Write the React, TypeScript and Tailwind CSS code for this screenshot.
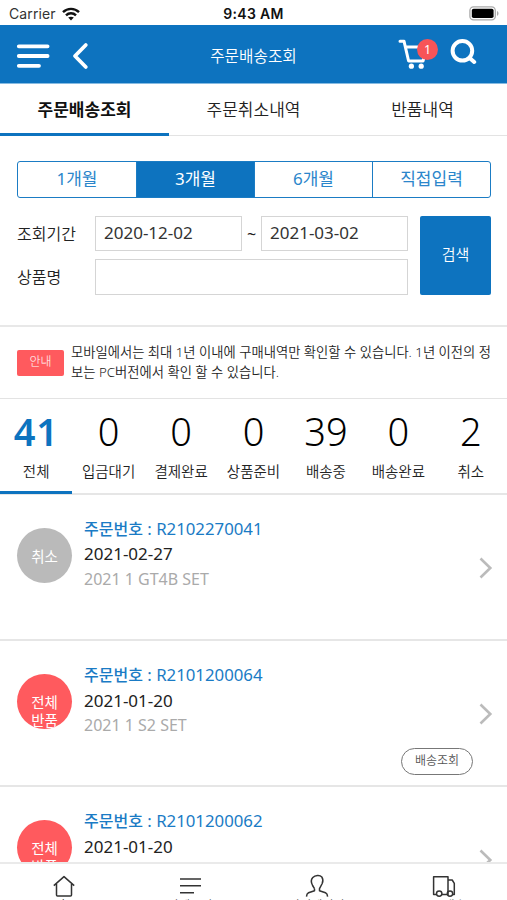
import { useState } from 'react';
import type { ReactNode } from 'react';

type Order = {
    id: string;
    date: string;
    product: string;
    status: string[];
    cancelled?: boolean;
    trackable?: boolean;
};

const tabs = ['주문배송조회', '주문취소내역', '반품내역'];
const periods = ['1개월', '3개월', '6개월', '직접입력'];

const counts = [
    { label: '전체', value: 41 },
    { label: '입금대기', value: 0 },
    { label: '결제완료', value: 0 },
    { label: '상품준비', value: 0 },
    { label: '배송중', value: 39 },
    { label: '배송완료', value: 0 },
    { label: '취소', value: 2 },
];

const orders: Order[] = [
    { id: 'R2102270041', date: '2021-02-27', product: '2021 1 GT4B SET', status: ['취소'], cancelled: true },
    { id: 'R2101200064', date: '2021-01-20', product: '2021 1 S2 SET', status: ['전체', '반품'], trackable: true },
    { id: 'R2101200062', date: '2021-01-20', product: '2021 1 S2 SET', status: ['전체', '반품'], trackable: true },
];

const StatusBar = () => (
    <div className="grid h-[25px] shrink-0 grid-cols-3 items-center bg-white px-[9px] pt-[2px] font-['Inter','Liberation_Sans',sans-serif] text-[14px] text-[#333]">
        <div className="flex items-center gap-[6px]">
            <span className="tracking-[0.1px]">Carrier</span>
            <svg width="18" height="14" viewBox="0 0 18 14" fill="none" stroke="#111" strokeWidth="2.4">
                <path d="M1 5.2C5.5 .7 12.5 .7 17 5.2" />
                <path d="M4 8.3C6.8 5.5 11.2 5.5 14 8.3" />
                <path d="M9 13.6 6.2 10.6C7.8 9.3 10.2 9.3 11.8 10.6Z" fill="#111" stroke="none" />
            </svg>
        </div>
        <span className="text-center font-semibold tracking-[0.3px] whitespace-nowrap text-[#111]">9:43 AM</span>
        <svg className="-mr-[2px] justify-self-end" width="31" height="15" viewBox="0 0 31 15">
            <rect x=".9" y=".9" width="25.4" height="13" rx="3.6" fill="#fff" stroke="#aaa" strokeWidth="1.3" />
            <rect x="2.8" y="2.8" width="21.8" height="9.2" rx="1.8" fill="#000" />
            <path d="M28 5v4.8c2-.8 2-4 0-4.8Z" fill="#aaa" />
        </svg>
    </div>
);

const Header = () => (
    <header className="flex h-[59px] shrink-0 items-center border-b border-[#86bbe2] bg-[#0d73bf] pr-[30px] pl-[16px] text-white">
        <div className="flex w-[150px] items-center pt-[3px]">
            <svg width="34" height="26" viewBox="0 0 34 26" stroke="#fff" strokeWidth="3.8" strokeLinecap="round">
                <path d="M2.8 3.3H31.6M2.8 13H31.6M2.8 22.8H23" />
            </svg>
            <svg className="ml-[22px]" width="18" height="28" viewBox="0 0 18 28" fill="none" stroke="#fff" strokeWidth="3.8" strokeLinecap="round" strokeLinejoin="round">
                <path d="M13.8 3 3 14 13.8 25" />
            </svg>
        </div>
        <h1 className="flex-1 pt-[5px] pl-[14px] text-center text-[15.7px] font-[350]">주문배송조회</h1>
        <div className="flex w-[150px] justify-end">
            <div className="relative mr-[20px] h-[32px] w-[33px]">
                <svg width="33" height="32" viewBox="0 0 33 32" fill="none" stroke="#fff" strokeWidth="3" strokeLinecap="round" strokeLinejoin="round">
                    <path d="M3 3.2H7L11.6 23H26L30 9H8.6" />
                    <circle cx="14.4" cy="28.2" r="2.6" fill="#fff" stroke="none" />
                    <circle cx="24.2" cy="28.2" r="2.6" fill="#fff" stroke="none" />
                </svg>
                <span className="absolute top-[1px] left-[20px] flex size-[21px] items-center justify-center rounded-full bg-[#f75458] pt-[2px] font-['Noto_Sans',sans-serif] text-[12.5px]">1</span>
            </div>
            <svg width="27" height="28" viewBox="0 0 27 28" fill="none" stroke="#fff" strokeWidth="4" strokeLinecap="round">
                <circle cx="12.4" cy="12.8" r="9.8" />
                <path d="m19.6 20 4.6 4" />
            </svg>
        </div>
    </header>
);

const DateInput = ({ value, className }: { value: string; className: string }) => (
    <input readOnly value={value} className={`h-[35px] border border-[#d5d5d5] bg-white px-[8px] pb-[3px] text-[17px] text-[#333] outline-none ${className}`} />
);

const SearchForm = () => {
    const [period, setPeriod] = useState('3개월');

    return (
        <section className="h-[191px] shrink-0 border-b-2 border-[#e8e8e8] pr-[16px] pl-[17px] pt-[25px] text-[16px] text-[#222]">
            <div className="grid h-[37px] w-[474px] grid-cols-4 overflow-hidden rounded-[3px] border border-[#1b7cc4]">
                {
                    periods.map((name, i) => (
                        <button
                            key={name}
                            onClick={() => setPeriod(name)}
                            className={`pb-[2px] text-[17px] ${i > 0 ? 'border-l border-[#1b7cc4]' : ''} ${name === period ? 'bg-[#0d73bf] text-white' : 'text-[#2b86cb]'}`}
                        >
                            {name}
                        </button>
                    ))
                }
            </div>
            <div className="mt-[18px] flex w-[474px] justify-between">
                <div className="flex flex-col gap-[8px]">
                    <div className="flex items-center">
                        <label className="w-[78px] font-[350]">조회기간</label>
                        <DateInput value="2020-12-02" className="w-[147px]" />
                        <span className="w-[19px] text-center">~</span>
                        <DateInput value="2021-03-02" className="w-[147px]" />
                    </div>
                    <div className="flex items-center">
                        <label className="w-[78px] font-[350]">상품명</label>
                        <input className="h-[36px] w-[313px] border border-[#d5d5d5] outline-none" />
                    </div>
                </div>
                <button className="h-[79px] w-[71px] rounded-[2px] bg-[#0d73bf] pb-[2px] text-[15px] font-[350] text-white">검색</button>
            </div>
        </section>
    );
};

const Notice = () => (
    <section className="flex h-[72px] shrink-0 items-center border-b border-[#e3e3e3] px-[17px]">
        <span className="flex h-[26px] w-[47px] shrink-0 items-center justify-center rounded-[2px] bg-[#ff5a5e] pb-[2px] text-[12px] font-light text-white">안내</span>
        <p className="-mt-[2px] ml-[7px] text-[13.3px] leading-[20px] font-[350] whitespace-nowrap text-[#222]">
            모바일에서는 최대 1년 이내에 구매내역만 확인할 수 있습니다. 1년 이전의 정<br />
            보는 PC버전에서 확인 할 수 있습니다.
        </p>
    </section>
);

const OrderRow = ({ order }: { order: Order }) => (
    <li className="relative flex h-[146.2px] shrink-0 border-b-2 border-[#e6e6e6] pt-[33px] pl-[17px]">
        <div className={`flex size-[55px] flex-col items-center overflow-hidden rounded-full text-[14.5px] leading-[18px] text-white ${order.cancelled ? 'justify-center bg-[#bababa]' : 'bg-[#ff5a5e] pt-[19px]'}`}>
            {order.status.map((line) => <span key={line}>{line}</span>)}
        </div>
        <div className="-mt-[12px] ml-[12px] text-[17px] leading-[25.4px]">
            <p className="text-[16.8px] font-[450] text-[#1a7bc5]"><span className="text-[16px] font-medium">주문번호</span> : {order.id}</p>
            <p className="-mt-px text-[#222]">{order.date}</p>
            <p className="text-[16px] text-[#aaa]">{order.product}</p>
        </div>
        <svg className="mt-[28px] mr-[14px] ml-auto" width="15" height="24" viewBox="0 0 15 24" fill="none" stroke="#bbb" strokeWidth="2.6">
            <path d="m2.5 2.5 9.8 9.5-9.8 9.5" />
        </svg>
        {order.trackable && (
            <button className="absolute right-[34px] bottom-[10px] h-[27px] w-[72px] rounded-full border border-[#777] pb-px text-[12px] font-[350] text-[#555]">배송조회</button>
        )}
    </li>
);

const NavItem = ({ label, children }: { label: string; children: ReactNode }) => (
    <a className="flex flex-col items-center text-[12px] leading-[16px] text-[#333]">
        <svg className="ml-[1px]" width="24" height="24" viewBox="0 0 24 24" fill="none" stroke="#333" strokeWidth="1.5" strokeLinejoin="round">
            {children}
        </svg>
        <span className="font-[350] whitespace-nowrap">{label}</span>
    </a>
);

const BottomNav = () => (
    <nav className="absolute inset-x-0 bottom-0 grid h-[38px] grid-cols-4 overflow-hidden border-t-2 border-[#eaeaea] bg-white pt-[10px]">
        <NavItem label="홈">
            <path d="m1.8 11.6 10.2-9 10.2 9M4.5 10v11q0 1 1 1h13q1 0 1-1V10" />
        </NavItem>
        <NavItem label="카테고리">
            <path d="M1 5h21M1 11.8h21M1 18.7h14" />
        </NavItem>
        <NavItem label="마이페이지">
            <path d="M9.5 14.7 7.6 11.5C5.7 8 6.1 5.3 7.8 3.5c2.3-2.4 7.2-2.6 9-.6 1 1.6 1.2 4.8.4 6.6l-2.7 5.2v2l6 2.1c1.4.6 2 1.6 2.1 3.8M9.5 14.7v2l-6 2.1c-1.3.6-1.9 1.6-2 3.8" />
        </NavItem>
        <NavItem label="주문배송">
            <path d="M4.7 20.5H1.6V2.8H16v17.7H9.8M16 6h4.2l2.1 3.4v11.1h-1.7" />
            <circle cx="7.2" cy="19.6" r="2.7" />
            <circle cx="18" cy="19.6" r="2.7" />
        </NavItem>
    </nav>
);

const App = () => {
    const [tab, setTab] = useState(tabs[0]);
    const [filter, setFilter] = useState('전체');

    return (
        <div className="relative flex h-[900px] w-[507px] flex-col overflow-hidden bg-white font-['Noto_Sans','Noto_Sans_CJK_KR',sans-serif]">
            <StatusBar />
            <Header />
            <div className="grid h-[52px] shrink-0 grid-cols-3 border-b border-[#e3e3e3]">
                {
                    tabs.map((name) => (
                        <button
                            key={name}
                            onClick={() => setTab(name)}
                            className={`-mb-px border-b-[3px] pt-[2px] text-[17px] ${name === tab ? 'border-[#0d73bf] font-bold text-[#111]' : 'border-transparent font-[350] text-[#222]'}`}
                        >
                            {name}
                        </button>
                    ))
                }
            </div>
            <SearchForm />
            <Notice />
            <div className="grid h-[96px] shrink-0 grid-cols-7 border-b-2 border-[#e6e6e6]">
                {
                    counts.map(({ label, value }) => (
                        <button
                            key={label}
                            onClick={() => setFilter(label)}
                            className={`mb-[-1px] flex flex-col items-center pt-[12px] ${label === filter ? 'border-b-[3px] border-[#0d73bf]' : ''}`}
                        >
                            <span className={`text-[38px] leading-[40px] ${label === filter ? 'font-semibold tracking-[0.6px] text-[#0d73bf]' : 'font-light text-black'}`}>{value}</span>
                            <span className="mt-[10px] text-[14.5px] leading-[20px] font-[350] text-[#222]">{label}</span>
                        </button>
                    ))
                }
            </div>
            <ul className="flex flex-col">
                {orders.map((order) => <OrderRow key={order.id} order={order} />)}
            </ul>
            <BottomNav />
        </div>
    );
};

export default App;
